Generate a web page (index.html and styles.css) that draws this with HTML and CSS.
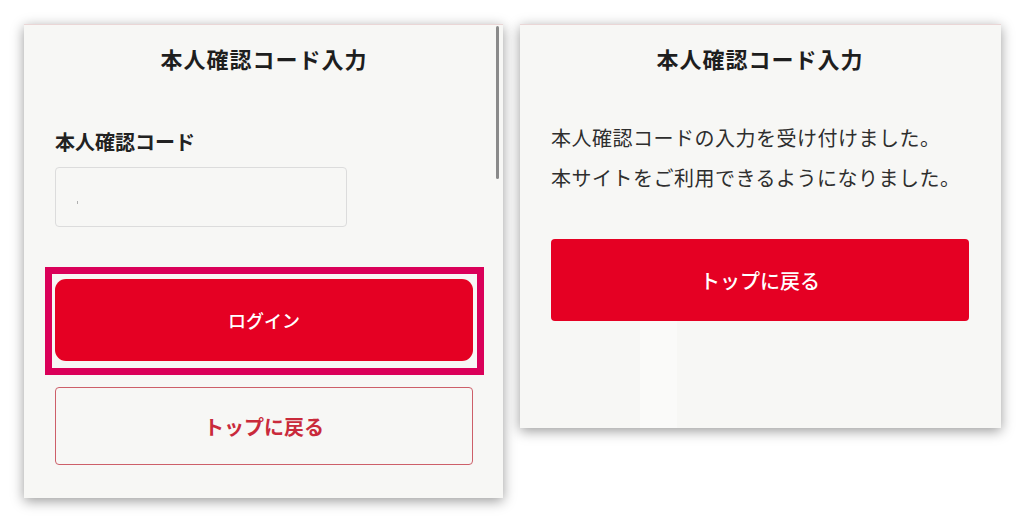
FILE: index.html
```html
<!DOCTYPE html>
<html lang="ja">
<head>
<meta charset="utf-8">
<title>本人確認コード入力</title>
<link rel="stylesheet" href="styles.css">
</head>
<body>
<div class="stage">
  <section class="panel panel-left">
    <div class="scrollbar"></div>
    <h1 class="title">本人確認コード入力</h1>
    <label class="label" for="code">本人確認コード</label>
    <div class="input" id="code"><span class="caret"></span></div>
    <div class="highlight">
      <button class="btn btn-primary btn-login">ログイン</button>
    </div>
    <button class="btn btn-outline">トップに戻る</button>
  </section>
  <section class="panel panel-right">
    <div class="strip"></div>
    <h1 class="title">本人確認コード入力</h1>
    <p class="message">本人確認コードの入力を受け付けました。<br>本サイトをご利用できるようになりました。</p>
    <button class="btn btn-primary btn-top">トップに戻る</button>
  </section>
</div>
</body>
</html>
```

FILE: styles.css
```css
* { box-sizing: border-box; }
html, body {
  margin: 0;
  padding: 0;
  background: #ffffff;
  width: 1024px;
  height: 523px;
  overflow: hidden;
  font-family: "Noto Sans CJK JP", "Noto Sans", sans-serif;
}
.stage {
  display: flex;
  align-items: flex-start;
  gap: 17px;
  padding: 24px 0 0 24px;
}
.panel {
  position: relative;
  background: #f7f7f5;
  box-shadow: 0 3px 12px rgba(0, 0, 0, 0.4);
  border-top: 1px solid #ead6d6;
  display: flex;
  flex-direction: column;
}
.panel-left {
  width: 479px;
  height: 474px;
  padding: 17px 30px 0 31px;
}
.panel-right {
  width: 481px;
  height: 404px;
  padding: 17px 32px 0 31px;
}
.scrollbar {
  position: absolute;
  top: 1px;
  right: 4px;
  width: 3px;
  height: 153px;
  border-radius: 2px;
  background: #8a8a8a;
}
.strip {
  position: absolute;
  left: 120px;
  bottom: 0;
  width: 37px;
  height: 107px;
  background: #fafaf9;
}
.title {
  margin: 0;
  font-size: 22px;
  line-height: 32px;
  font-weight: 700;
  letter-spacing: 1px;
  text-align: center;
  color: #1e1e1e;
  position: relative;
}
.label {
  display: block;
  margin-top: 54px;
  font-size: 20px;
  line-height: 28px;
  font-weight: 700;
  color: #222;
}
.input {
  margin-top: 11px;
  width: 292px;
  height: 60px;
  border: 1px solid #dcdcdc;
  border-radius: 4px;
  background: #f7f7f5;
  display: flex;
  align-items: center;
  padding: 10px 0 0 21px;
}
.caret {
  width: 1px;
  height: 3px;
  background: #b0b0b0;
}
.btn {
  display: flex;
  align-items: center;
  justify-content: center;
  width: 100%;
  font-family: inherit;
  font-weight: 700;
  cursor: pointer;
  position: relative;
}
.btn-primary {
  background: #e50023;
  color: #ffffff;
  border: none;
  font-weight: 500;
}
.highlight {
  margin: 40px -11px 0 -10px;
  border: 7px solid #da0059;
  padding: 5px 4px 7px 3px;
}
.btn-login {
  height: 82px;
  border-radius: 11px;
  font-size: 18px;
}
.btn-outline {
  margin-top: 12px;
  height: 78px;
  background: transparent;
  border: 1.5px solid #cd5f69;
  border-radius: 4px;
  color: #c92a3b;
  font-size: 20px;
}
.message {
  margin: 44px 0 0 0;
  font-size: 20px;
  line-height: 40px;
  letter-spacing: 0.5px;
  color: #2e2e2e;
  position: relative;
}
.btn-top {
  margin-top: 41px;
  height: 82px;
  border-radius: 4px;
  font-size: 20px;
}
```
